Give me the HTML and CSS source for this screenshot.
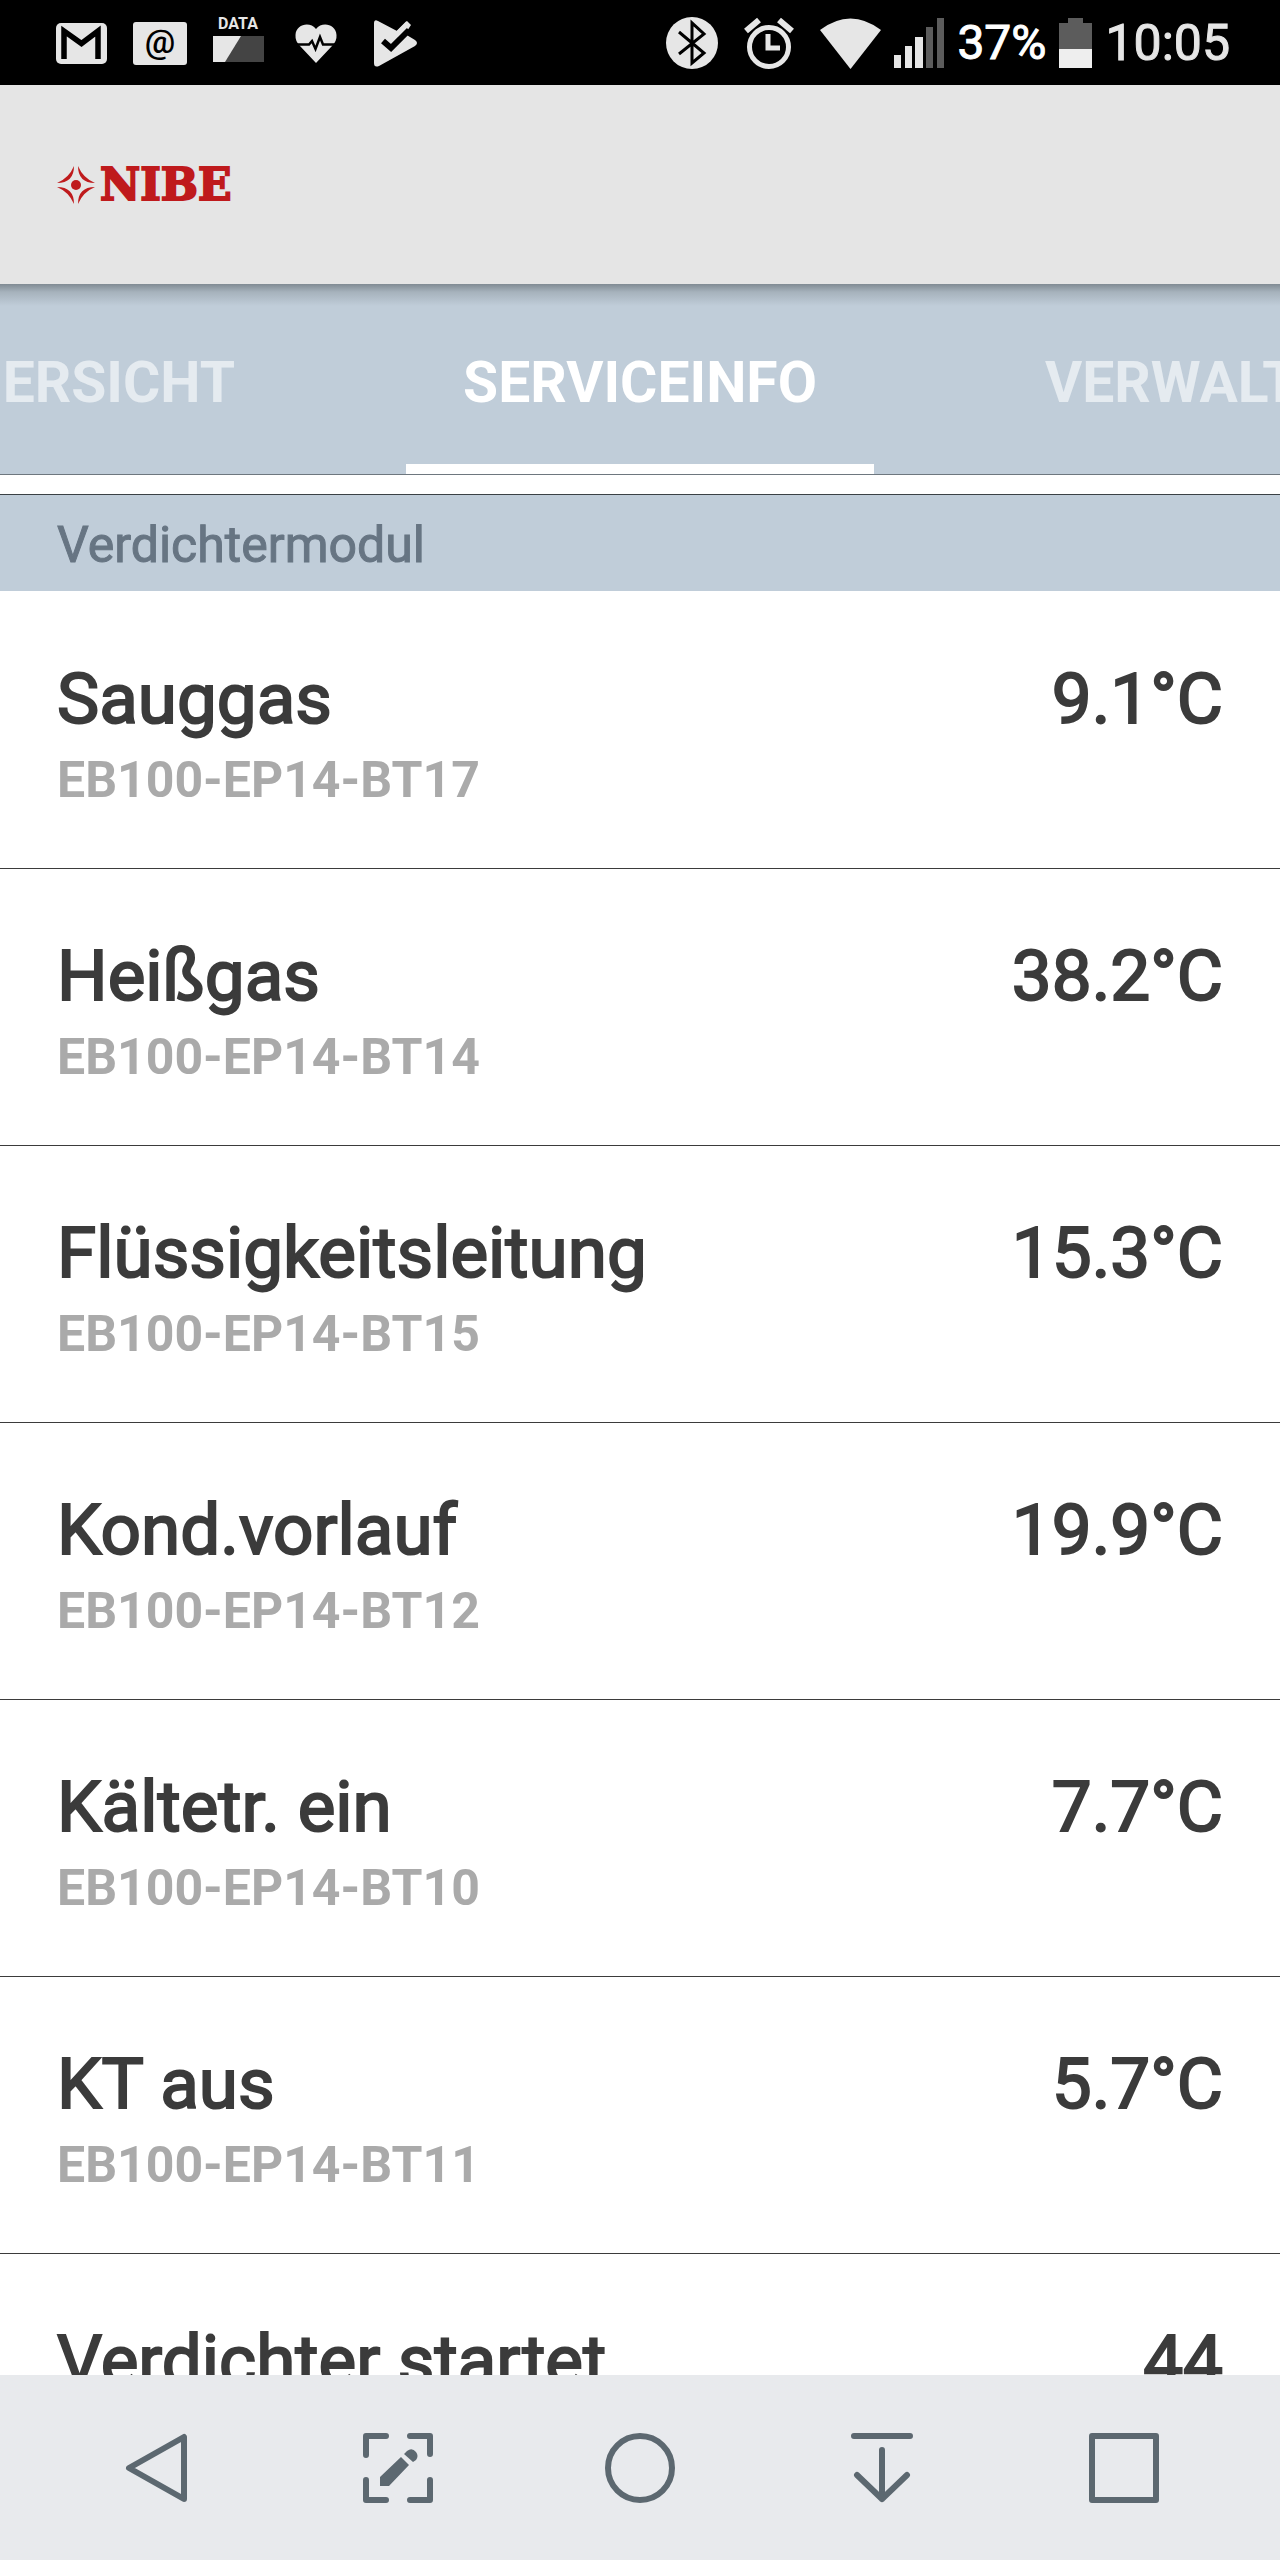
FILE: index.html
```html
<!DOCTYPE html>
<html lang="de">
<head>
<meta charset="utf-8">
<meta name="viewport" content="width=device-width, initial-scale=1">
<title>NIBE Serviceinfo</title>
<link rel="stylesheet" href="styles.css">
</head>
<body>
<div class="screen">
  <div class="status">
    <div class="status-apps">
      <svg class="app-icon" viewBox="0 0 56 56"><rect x="2" y="8" width="51" height="41" rx="5" fill="#e6e6e6"/><path d="M10 44V16L27.500 28.500L44 16V44" fill="none" stroke="#000" stroke-width="5.500"/></svg>
      <svg class="app-icon" viewBox="0 0 56 56"><rect x="1" y="7" width="54" height="43" rx="3" fill="#e6e6e6"/><text class="at-sign" x="28" y="38" text-anchor="middle">@</text></svg>
      <svg class="app-icon" viewBox="0 0 56 56"><text class="data-label" x="28" y="14" text-anchor="middle">DATA</text><path d="M3 21H54V47H3Z" fill="#444"/><path d="M3 21H31L15 47H3Z" fill="#e6e6e6"/></svg>
      <svg class="app-icon" viewBox="0 0 56 56"><path d="M28 48L12 31Q7 26 7.500 20C8 9 22 6 28 14C34 6 48 9 48.500 20Q49 26 44 31Z" fill="#e6e6e6"/><path d="M7 29.500H21L24 26L27.500 34L32 22L35 29.500H49" fill="none" stroke="#000" stroke-width="2.500"/></svg>
      <svg class="app-icon" viewBox="0 0 56 56"><path d="M8 8Q8 4 12 6L31 16L41 6L45 10L39 19L49 25Q53 28 49 31L13 51Q8 53 8 48Z" fill="#e6e6e6"/><path d="M17 26L25 33L43 15" fill="none" stroke="#000" stroke-width="6"/><path d="M30 20L42 8" stroke="#e6e6e6" stroke-width="5"/></svg>
    </div>
    <div class="status-system">
      <div class="status-radios">
        <svg width="52" height="52" viewBox="0 0 52 52"><circle cx="26" cy="26" r="26" fill="#e6e6e6"/><path d="M13 15L38 36L26 46V6L38 17L13 37" fill="none" stroke="#000" stroke-width="3"/></svg>
        <svg width="50" height="52" viewBox="0 0 50 52"><circle cx="25" cy="30" r="19.500" fill="none" stroke="#e6e6e6" stroke-width="5"/><path d="M2 14L15 3M48 14L35 3" stroke="#e6e6e6" stroke-width="6"/><path d="M24 17V31H36" fill="none" stroke="#e6e6e6" stroke-width="5"/></svg>
        <svg width="61" height="52" viewBox="0 0 61 52"><path d="M0 13Q30.500 -10 61 13L30.500 52Z" fill="#e6e6e6"/></svg>
      </div>
      <svg width="50" height="52" viewBox="0 0 50 52"><path d="M0 38h7v13H0zM11 29h7v22h-7zM21 20h8v31h-8z" fill="#e6e6e6"/><path d="M32 10h7v41h-7zM43 1h7v50h-7z" fill="#5c5c5c"/></svg>
      <span class="battery-level">37%</span>
      <svg width="33" height="52" viewBox="0 0 33 52"><path d="M0 6H9V1H24V6H33V32H0Z" fill="#5c5c5c"/><path d="M0 32H33V51H0Z" fill="#eee"/></svg>
      <time class="clock">10:05</time>
    </div>
  </div>

  <header class="brand-bar">
    <svg class="brand-mark" viewBox="0 0 38 38"><g fill="#bf1a1c"><circle cx="19" cy="19" r="5"/><path d="M17 0Q12 12 0 17Q17 17 17 0Z"/><path d="M21 0Q26 12 38 17Q21 17 21 0Z"/><path d="M17 38Q12 26 0 21Q17 21 17 38Z"/><path d="M21 38Q26 26 38 21Q21 21 21 38Z"/></g></svg>
    <span class="brand-name">NIBE</span>
  </header>

  <nav class="tabs">
    <button class="tab tab-before" type="button">ÜBERSICHT</button>
    <button class="tab tab-active" type="button" aria-current="page">SERVICEINFO</button>
    <button class="tab tab-after" type="button">VERWALTUNG</button>
  </nav>

  <main class="content">
    <h2 class="section-title">Verdichtermodul</h2>
    <ul class="readings">
      <li class="reading"><div><div class="name">Sauggas</div><div class="sensor">EB100-EP14-BT17</div></div><div class="value">9.1°C</div></li>
      <li class="reading"><div><div class="name">Heißgas</div><div class="sensor">EB100-EP14-BT14</div></div><div class="value">38.2°C</div></li>
      <li class="reading"><div><div class="name">Flüssigkeitsleitung</div><div class="sensor">EB100-EP14-BT15</div></div><div class="value">15.3°C</div></li>
      <li class="reading"><div><div class="name">Kond.vorlauf</div><div class="sensor">EB100-EP14-BT12</div></div><div class="value">19.9°C</div></li>
      <li class="reading"><div><div class="name">Kältetr. ein</div><div class="sensor">EB100-EP14-BT10</div></div><div class="value">7.7°C</div></li>
      <li class="reading"><div><div class="name">KT aus</div><div class="sensor">EB100-EP14-BT11</div></div><div class="value">5.7°C</div></li>
      <li class="reading"><div><div class="name">Verdichter startet</div></div><div class="value">44</div></li>
    </ul>
  </main>

  <nav class="system-nav">
    <button type="button" aria-label="Zurück"><svg viewBox="0 0 70 70"><path d="M63 4V66L8 35Z"/></svg></button>
    <button type="button" aria-label="Bildschirm aufnehmen"><svg viewBox="0 0 70 70"><path d="M3 22V3H23M47 3H67V21M67 47V67H47M23 67H3V47"/><path class="solid" d="M17 44L38 24L46 32L26 53H17ZM41 21L44 18Q49 14 53 19Q56 23 53 27L50 29Z"/></svg></button>
    <button type="button" aria-label="Startbildschirm"><svg viewBox="0 0 70 70"><circle cx="35" cy="35" r="32"/></svg></button>
    <button type="button" aria-label="Benachrichtigungen"><svg viewBox="0 0 70 70"><path d="M7 3H63M35 17V66M10 42L35 66L60 42"/></svg></button>
    <button type="button" aria-label="Letzte Apps"><svg viewBox="0 0 70 70"><path d="M3 3H67V67H3Z"/></svg></button>
  </nav>
</div>
</body>
</html>
```

FILE: styles.css
```css
* {
  box-sizing: border-box;
}

body {
  margin: 0;
  font-family: Roboto, "Liberation Sans", sans-serif;
  background: #fff;
}

button {
  margin: 0;
  padding: 0;
  border: 0;
  background: none;
  font: inherit;
}

svg {
  display: block;
  flex: none;
}

.screen {
  display: flex;
  flex-direction: column;
  height: 100vh;
  overflow: hidden;
}

/* Status bar */
.status {
  flex: none;
  display: flex;
  justify-content: space-between;
  align-items: center;
  height: 85px;
  padding: 0 50px 0 54px;
  background: #000;
  color: #e6e6e6;
}

.status-apps {
  display: flex;
  gap: 22px;
}

.app-icon {
  width: 56px;
  height: 56px;
}

.at-sign {
  font-size: 34px;
  font-weight: 500;
}

.data-label {
  font-size: 16px;
  font-weight: 700;
  fill: #e6e6e6;
}

.status-system {
  display: flex;
  align-items: center;
  gap: 13px;
}

.status-radios {
  display: flex;
  gap: 26px;
}

.battery-level {
  font-size: 48px;
  line-height: 52px;
  color: #fff;
  -webkit-text-stroke: 1px #fff;
}

.clock {
  font-size: 50px;
  line-height: 52px;
  -webkit-text-stroke: 1px #e6e6e6;
}

/* Brand bar */
.brand-bar {
  flex: none;
  display: flex;
  align-items: center;
  gap: 5px;
  height: 199px;
  padding: 0 57px;
  background: #e5e5e5;
}

.brand-mark {
  width: 38px;
  height: 38px;
}

.brand-name {
  font: 700 44px/48px "DejaVu Serif", serif;
  color: #bf1a1c;
  -webkit-text-stroke: 2px #bf1a1c;
}

/* Tabs */
.tabs {
  flex: none;
  display: grid;
  grid-template-columns: minmax(0, 1fr) auto minmax(0, 1fr);
  gap: 114px;
  overflow: hidden;
  border-bottom: 1px solid #6e777f;
  background: linear-gradient(#808b93, #a6b2bc 8px, #c0cdd9 22px);
}

.tab {
  padding: 17px 57px 0;
  border-bottom: 10px solid transparent;
  font-size: 57px;
  font-weight: 700;
  line-height: 163px;
  white-space: nowrap;
  color: #e5ebf0;
}

.tab-before {
  justify-self: end;
}

.tab-active {
  border-color: #fff;
  color: #fff;
}

.tab-after {
  justify-self: start;
}

/* Readings */
.content {
  flex: 1;
  min-height: 0;
  overflow-y: auto;
  scrollbar-width: none;
  padding-top: 19px;
}

.section-title {
  margin: 0;
  padding: 4px 57px 0;
  border-top: 1px solid #3a4045;
  background: #c0cdd9;
  font-size: 50px;
  font-weight: 400;
  line-height: 92px;
  color: #677583;
  -webkit-text-stroke: 1px #677583;
}

.readings {
  margin: 0;
  padding: 1px 0 0;
  list-style: none;
}

.reading {
  display: flex;
  justify-content: space-between;
  padding: 62px 57px 52px;
  border-bottom: 1px solid #3b3b3b;
}

.name,
.value {
  font-size: 71px;
  line-height: 90px;
  color: #3b3b3b;
  -webkit-text-stroke: 2px #3b3b3b;
}

.sensor {
  font-size: 50px;
  font-weight: 700;
  line-height: 72px;
  color: #aaa;
}

/* System navigation */
.system-nav {
  flex: none;
  display: grid;
  grid-template-columns: repeat(5, 1fr);
  height: 185px;
  padding: 0 35px;
  background: #e8eaed;
}

.system-nav button {
  display: flex;
  align-items: center;
  justify-content: center;
}

.system-nav svg {
  width: 70px;
  height: 70px;
  fill: none;
  stroke: #5c6870;
  stroke-width: 6;
  stroke-linecap: round;
  stroke-linejoin: round;
}

.system-nav .solid {
  fill: #5c6870;
  stroke: none;
}
```
